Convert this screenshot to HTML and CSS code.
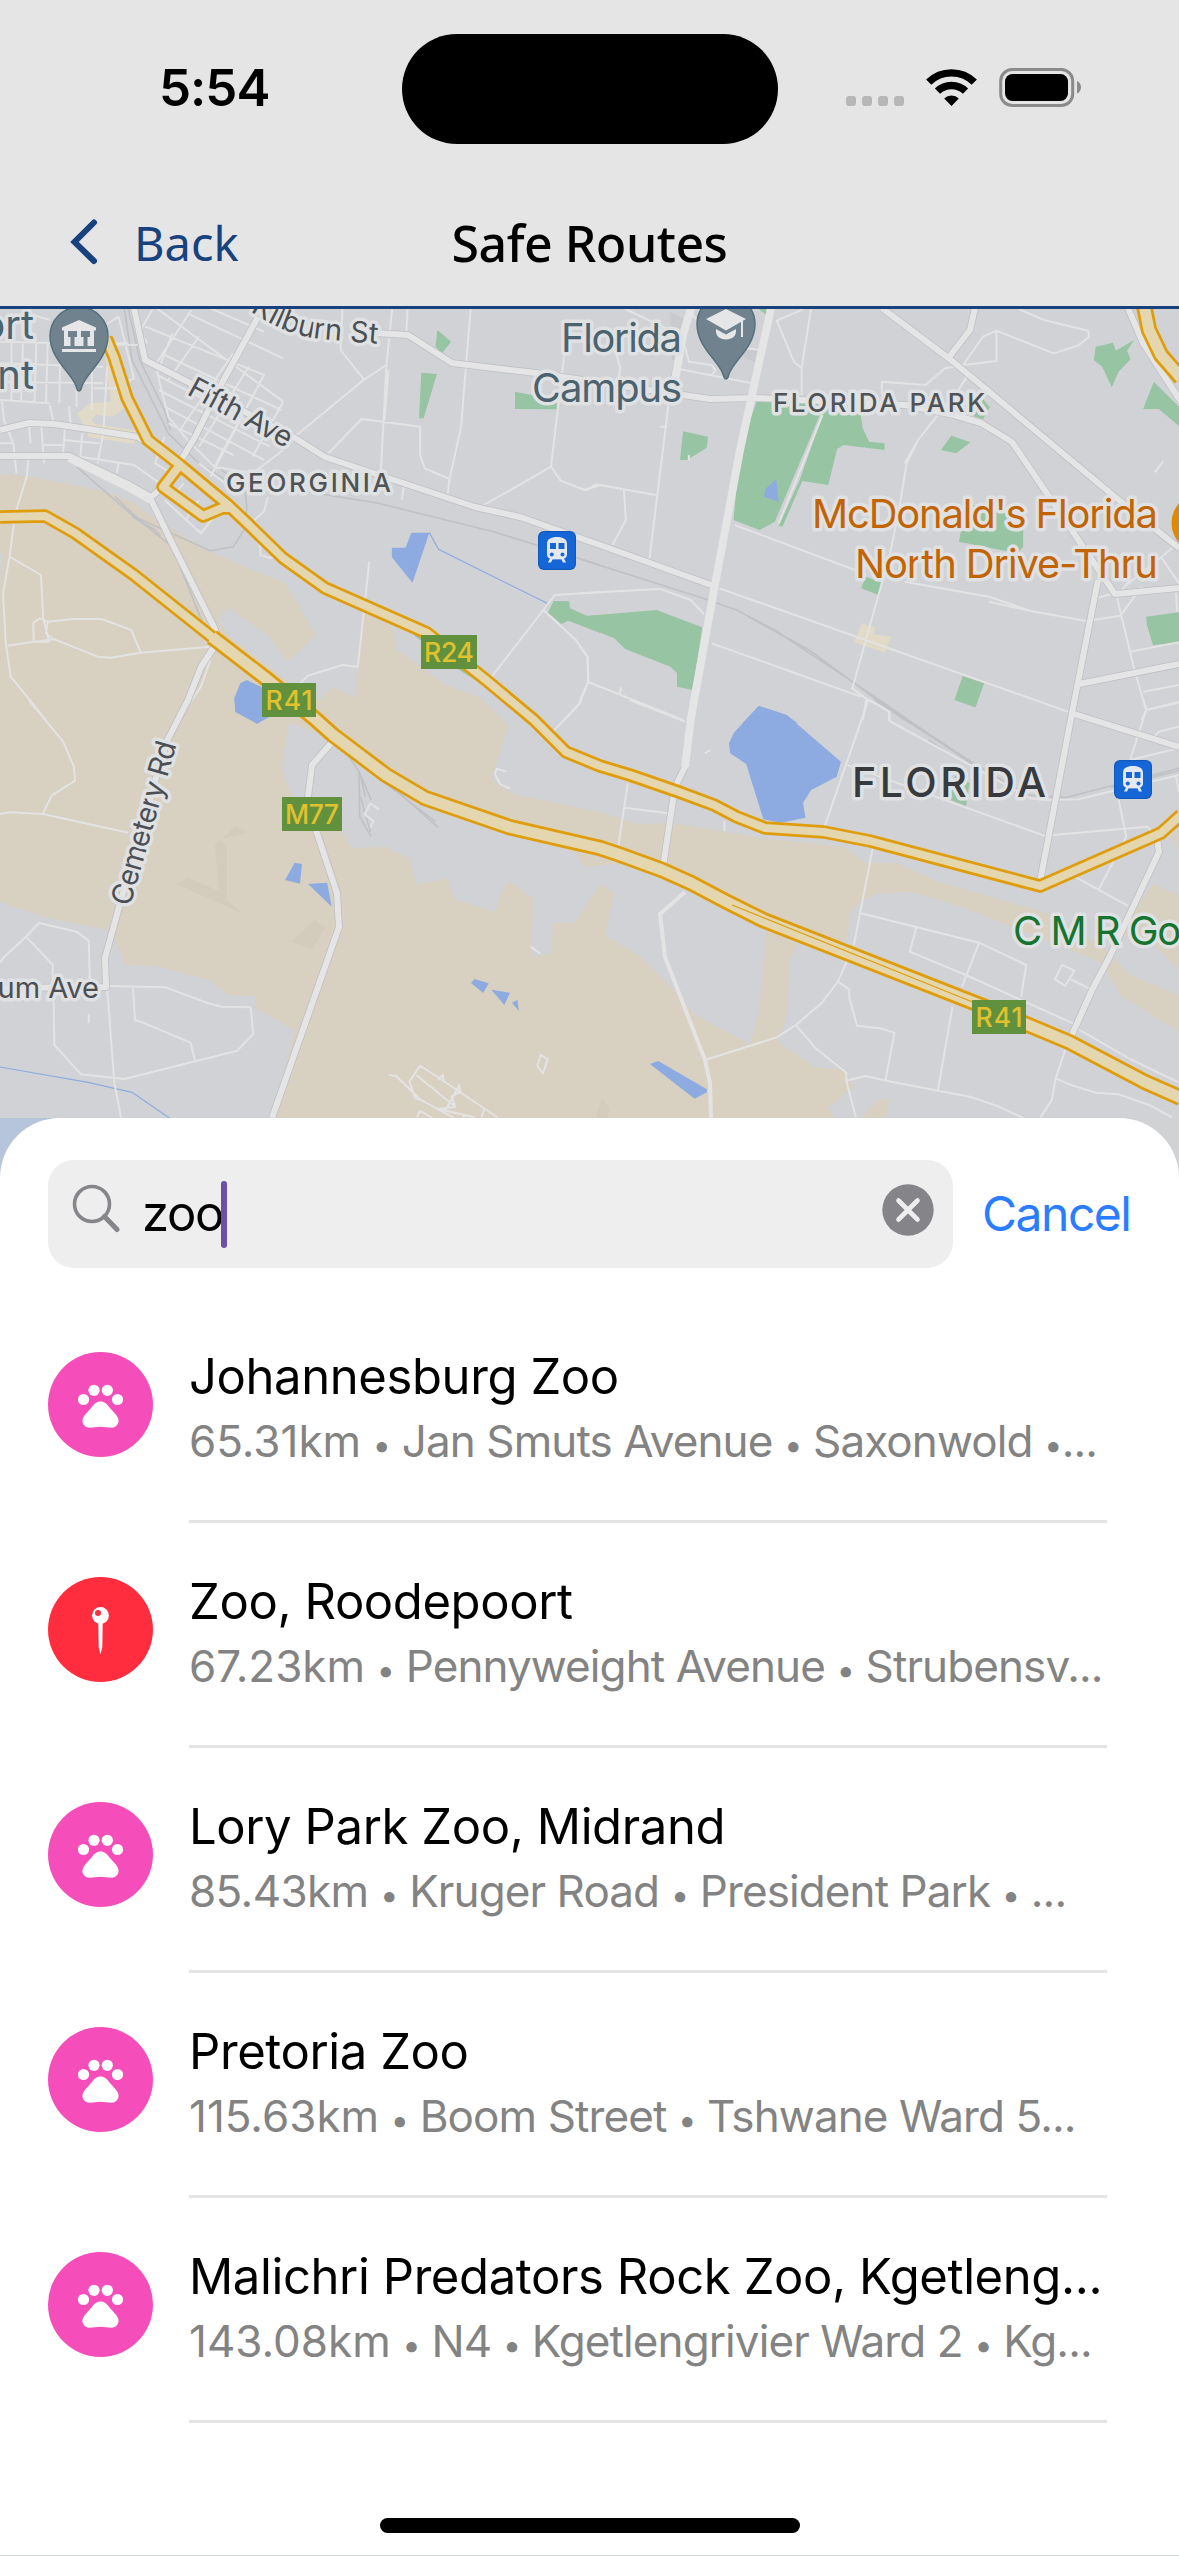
FILE: index.html
```html
<!DOCTYPE html>
<html lang="en">
<head>
<meta charset="utf-8">
<title>Safe Routes</title>
<link rel="stylesheet" href="styles.css">
</head>
<body>
<svg class="defs" width="0" height="0" aria-hidden="true">
  <symbol id="paw" viewBox="0 0 105 105">
    <circle cx="35.5" cy="47.5" r="5.6"/><circle cx="46" cy="38.3" r="5.6"/><circle cx="59.3" cy="38.3" r="5.6"/><circle cx="69.5" cy="47.5" r="5.6"/>
    <path d="M52.5 49.5c4 0 6.500 2.500 9 6l6.500 7.200c5.500 6.500 1.500 13-5 13-3.500 0-6-1-10.500-1s-7 1-10.500 1c-6.500 0-10.500-6.500-5-13l6.500-7.200c2.500-3.500 5-6 9-6z"/>
  </symbol>
  <symbol id="train" viewBox="0 0 38 39">
    <rect width="38" height="39" rx="6" fill="#1259bd"/><rect x="1.200" y="1.200" width="35.600" height="36.600" rx="5" fill="#1567d8"/>
    <path fill="#e5e8ee" d="M9 13c0-5 4-7 10-7s10 2 10 7v10c0 2.500-1 4-3 4.500l2 4h-3l-1.500-3h-9l-1.500 3h-3l2-4c-2-.5-3-2-3-4.500z"/>
    <path fill="#1567d8" d="M12 12h6v6h-6zM20.500 12h6v6h-6zM14.500 30h9v-1.200h-9z"/><circle cx="13.800" cy="23.500" r="2" fill="#1567d8"/><circle cx="24.500" cy="23.500" r="2" fill="#1567d8"/>
  </symbol>
</svg>
<main class="screen">
  <header class="top">
    <div class="status">
      <span class="time">5:54</span>
      <span class="island"></span>
      <svg class="indicators" width="236" height="40" viewBox="0 0 236 40">
        <g fill="#b7b7b7"><rect x="0" y="28" width="10" height="10" rx="3"/><rect x="16" y="28" width="10" height="10" rx="3"/><rect x="32" y="28" width="10" height="10" rx="3"/><rect x="48" y="28" width="10" height="10" rx="3"/></g>
        <g transform="translate(105.500 38)">
          <path d="M0 0l-7.300-7.500a10.500 10.500 0 0 1 14.600 0z"/>
          <path d="M-14-14.800a20 20 0 0 1 28 0" fill="none" stroke="#000" stroke-width="7.400"/>
          <path d="M-22.800-23.800a32.500 32.500 0 0 1 45.600 0" fill="none" stroke="#000" stroke-width="7.400"/>
        </g>
        <rect x="154.700" y="1.500" width="72" height="36" rx="11.500" fill="none" stroke="#8b8b8b" stroke-width="3"/>
        <rect x="159" y="6" width="63" height="27" rx="7.500"/>
        <path d="M231 13c5.300 2 5.300 10.500 0 12.500z" fill="#8b8b8b"/>
      </svg>
    </div>
    <nav class="nav">
      <a class="back">
        <svg width="28" height="46" viewBox="0 0 28 46"><path d="M24 3.500L4.500 23 24 42" fill="none" stroke="#17427e" stroke-width="6" stroke-linecap="round"/></svg>
        <span>Back</span>
      </a>
      <h1>Safe Routes</h1>
    </nav>
  </header>

  <svg class="map" width="1179" height="809" viewBox="0 309 1179 809">
    <rect y="309" width="1179" height="809" fill="#d1d2d6"/>
    <!-- open land -->
    <path class="land" d="M0 475L27 476 69 484 111 493 134 503 165 525 210 551 245 567 285 583 316 635 288 661 268 635 228 608 218 620 230 637 300 690 320 700 332 687 356 698 364 612 393 625 395 648 446 685 480 697 503 720 508 725 492 780 513 794 600 812 639 824 672 823 763 838 844 847 866 863 897 863 939 882 1027 907 1046 913 1103 947 1130 975 1179 995V1032L1120 995 1103 963 962 907 912 892 878 893 863 900 850 912 847 940 797 945 790 960 786 1020 778 1042 815 1067 844 1070 854 1087 828 1108 836 1119H0z"/>
    <path class="land" d="M861 1118L878 1100 889 1099 886 1118zM1153 884L1179 895V970L1150 940 1118 935zM1170 837L1179 828V850z"/>
    <path class="town" d="M289 723L281 768 293 797 341 830 352 848 386 847 409 858 417 885 448 878 454 899 496 912 499 897 509 881 533 898 531 957 551 953 554 922 575 923 601 884 614 893 605 936 639 955 672 988 695 1015 750 1044 759 1013 767 927 660 875 620 863 585 867 576 853 500 832 430 803 340 740zM0 902L48 918 109 930 115 940 126 965 157 966 209 980 228 995 255 996 256 1008 295 1031 272 1118H0zM0 553H3L0 590zM797 945L767 927 860 950 850 975 790 960z"/>
    <path fill="#d3cbbb" d="M176 884L188 878 219 891 215 845 236 826 248 833 220 839 227 848 227 900 242 913zM291 942L315 920 325 928 312 949z"/>
    <!-- parks, water and built-up patches, upper half -->
    <g transform="translate(0 300) scale(.38265 .33333)">
      <path class="park" d="M1143 90L1179 125 1155 160 1138 140zM1101 218L1142 222 1107 355 1095 355zM1346 275L1455 300V328L1346 327zM1447 903L1487 904 1490 925 1535 948 1568 945V998L1485 962 1467 972 1432 938zM1075 1000L1130 1020 1270 1160 1200 1110z"/>
      <path class="water" d="M1075 698H1122L1078 848 1024 772V743H1060zM628 1150L645 1140 690 1165 705 1250 672 1271 615 1235 612 1195z"/>
      <path class="mall" d="M275 170L300 150 325 250 330 320 295 350 250 345 240 360 250 372 355 392 352 432 232 412 220 380 202 340 235 310 290 305z"/>
      <path class="stream" d="M1122 698L1146 748 1430 910"/>
      <g class="rail"><path d="M325 25L345 180 410 330 440 400 520 490 590 540M335 25L365 180 430 330 445 390M200 500L340 640 450 740 530 970M300 590L360 655 550 752 610 740 640 685 645 620 640 570 560 490M345 650L405 690 420 710M800 575L990 610 1290 695 1568 795"/></g>
      <g class="street"><path d="M400 25L365 95 385 130M500 30L400 205M550 25L690 95M380 80L690 225 560 500M410 25L740 305M430 165L735 330M410 225L700 395M415 270L705 440M430 320L690 480M440 370L610 465M490 40L740 175M740 305L660 470M650 200L520 440M610 160L470 390M520 110L440 240M410 215L440 350 490 420 560 500 660 520 740 450M450 100L410 220M690 225L550 530M0 125L360 135M30 130V305M60 130L55 305M95 130L90 310M125 130L120 310M158 140L155 310M0 190L270 200M0 245L270 250M0 300L130 310M310 50L350 235 300 260M60 35L130 60M255 90L310 50M275 130H335M240 210V330M280 200L270 400M200 260V320M245 265H330M5 300L10 360 35 430 43 520M75 370L80 430M108 375L115 490M170 380L165 460M0 430H35M115 435H165M165 420L260 430M215 400L210 470 350 495 430 560M270 400L255 490M310 490L305 520M130 315L140 370M180 320L185 375M75 470L70 530 40 640 25 770 8 880 15 1030 28 1130 120 1260M25 770L107 825 113 955 128 1025 88 1025 87 968 105 955 125 965 190 957 265 957 343 990 368 1058M20 1037L88 1025 143 1018 255 1070 290 1073 368 1058 550 1040M125 965L120 1000 140 1018M430 410L405 490 450 520M430 600L525 700 560 650M450 590L480 550M485 660L520 600M520 490L600 560M480 530L580 600M700 590L690 635 665 660M680 710V765L710 775 730 750M1025 25L1010 195 995 520M1015 210L1005 360M1010 195L950 240 770 410M895 25L890 150 952 240M858 460L945 357 1098 380V465L1110 505 1175 537M1175 537L1205 380 1230 25M1175 537L1170 580M1065 25L1062 100M1475 160L1440 500 1465 542 1528 570 1568 555M1440 500L1265 615M1055 560L1050 600M965 785L935 1100 895 1095 805 1127 785 1150M1568 877L1450 885 1420 930 1505 1020 1535 1070 1537 1145 1515 1210 1475 1260M1420 930L1285 1130M1537 1145L1568 1162M550 1080L525 1160 490 1220"/></g>
    </g>
    <g transform="translate(580 300) scale(.38202 .33333)">
      <path fill="#c9cace" d="M235 35L270 55 260 180 240 180zM300 110L470 150 465 190 400 160z"/>
      <path class="park" d="M463 303H640L735 345 740 385 757 425 797 430V450L690 435 673 447 650 555 582 543 530 680 520 678 575 540 635 345 628 345 510 665 470 690 402 660 418 450zM466 25H491V47zM1350 140L1395 128 1403 152 1450 120 1432 152 1441 178 1410 215 1392 262 1367 200 1345 180zM1502 245L1568 320V378L1515 327H1474zM1055 298L1073 322 1055 358 1030 348zM972 407L1022 427 985 460 945 450zM270 394L335 410 332 443 280 480H262zM1010 610L1160 650V740L1145 760 992 725zM748 830L790 848 780 884 736 865zM1002 1128L1058 1150 1035 1222 980 1200zM1482 950L1568 937V1027L1500 1036 1484 975zM0 940L15 948 200 930 320 982 295 1170 254 1160V1120L237 1100 118 1047 90 1015 0 975z"/>
      <path class="water" d="M514 537L520 605 482 590 485 567zM468 1218L540 1245 570 1270H425z"/>
      <path class="mall" d="M738 970L773 982 768 1002 814 1010 800 1058 717 1027z"/>
      <g class="rail"><path d="M0 777L310 890 410 930 510 990 720 1150 860 1260M440 950L600 1050 730 1160 850 1260"/></g>
      <g class="street"><path d="M635 345L520 670M115 25L225 85M95 160L105 205 100 260M275 140L285 185 345 195 355 210 345 225M262 208L450 250M435 145L470 150M585 27L515 62 560 185 580 205V285M605 25L580 205M295 45L310 65M232 310L182 775M210 380H228M0 565L15 570 42 553 198 585M115 570L120 660 85 735M285 465V482M0 880L210 867 290 900 325 943M345 1030L735 1190M365 865L1290 1240M405 675L720 810M850 845L1070 890 1180 933 1325 963 1415 947 1470 860M1070 905L1180 933M1150 28L1215 60 1330 92 1333 110 1303 137 1240 160 1090 92 1055 110 1003 195 1090 183V92M1003 195L955 205 905 255 790 245V285M1003 195L1010 235 990 270 940 340 885 420 855 490 835 630 810 770 790 850 713 1165 750 1197 740 1260M880 430L850 490M1527 483L1505 517M1403 880L1450 1105 1482 1230 1470 1260M1350 895L1415 875 1440 840M1425 860L1550 745M1520 770L1568 850M1560 880L1563 935M1440 1055L1568 1027M1482 1230L1568 1205M1475 1175L1568 1155M20 1145L270 1260M0 1040L20 1070 22 1145 0 1200M108 1162L103 1185M750 1197L810 1235 808 1260"/></g>
    </g>
    <!-- lower half -->
    <g transform="translate(0 700) scale(.38265 .33333)">
      <path class="water" d="M770 488L789 492 784 551 745 540zM805 552L855 548 867 620zM1240 837L1277 850 1263 879 1231 849zM1284 869L1333 878 1318 915zM1352 900L1356 933 1338 908zM625 0H690V52L672 71 615 35z"/>
      <path class="stream" d="M0 1101L230 1147 345 1177 445 1256"/>
      <g class="rail"><path d="M890 130L938 215 940 350 970 410M938 215L970 300M940 220L955 290M942 290L968 395M985 230L1138 365M1010 245L1145 382"/></g>
      <g class="street"><path d="M75 0L165 125 193 200 196 242 135 287 112 340M0 342L25 337 112 342 335 398M0 788L10 772 68 710 102 669 200 695 232 722 235 855M68 710L138 795V850M140 900L142 1035 212 1123 325 1137 620 1052 662 1002 655 922 580 920 540 908 433 862 278 858M232 942V970M347 860L353 960 372 967 498 1028 510 1083M280 865L299 1150 317 1256M1445 95L1515 10V0M1323 215L1298 206 1293 222 1307 253 1335 266M990 328L968 310 953 343 976 363 968 382M1387 740L1413 761M1413 1065L1431 1078 1419 1120 1404 1098zM1016 1125L1035 1128 1100 1200 1185 1253M1100 1200L1085 1195 1070 1145 1098 1097 1155 1140 1300 1252M1088 1125L1190 1220 1145 1227 1240 1252M1145 1140L1157 1125 1160 1145M1165 1230L1200 1155 1203 1175 1180 1190 1190 1220M1090 1252L1097 1232 1130 1254M1210 1254L1218 1243M1258 1252L1265 1228"/></g>
    </g>
    <g transform="translate(580 700) scale(.38202 .33333)">
      <path class="park" d="M985 0H1042L1035 22zM985 220L1020 250 1010 318 960 295z"/>
      <path class="water" d="M468 18L540 44 683 185 672 230 605 270 584 308 590 353 525 368 480 358 435 192 393 160 390 130 403 98zM205 1083L332 1168V1177L300 1196 183 1092z"/>
      <path fill="#d3cbbb" d="M57 1197L78 1225 70 1256H40z"/>
      <g class="rail"><path d="M770 0L940 125 1030 195M780 0L1030 190 1170 285 1270 293 1390 258 1568 205M912 120L970 165M1390 262L1568 212"/></g>
      <g class="street"><path d="M130 0L275 65M0 0L4 5M755 0L640 380M760 0L810 35V63L1180 295 1220 300 1305 298 1568 225M695 193L1215 407 1485 380 1520 420M1475 0L1482 30 1440 180M1482 30L1568 8M1500 115L1515 95 1568 80M1410 300L1430 410 1357 570M1440 180L1568 145M1290 527L1435 618M1560 230L1568 275M125 250L100 440M115 323L232 340M378 362V393M327 160L341 150M767 440L717 735M700 780L675 845 632 910 565 975 515 1012 327 1080M675 845L705 868V893L725 977 785 985 823 998 800 1140M565 975L617 1045 697 1118V1142L722 1252M697 1142L747 1128 815 1145 1020 1190 1090 1217 1160 1254M735 640L1045 728 1168 795 1155 890M880 685L863 755 1010 825 1300 975M1045 728L1000 860M975 920L937 1170M1262 795L1294 812 1270 858 1243 838zM1285 838L1333 866M1305 988L1440 1077 1568 1148M1270 1050L1245 1135 1235 1200 1205 1252M1245 1135L1290 1157 1350 1178 1410 1183 1490 1215 1550 1252"/></g>
    </g>
    <!-- main roads: shaded edge, then surface -->
    <g class="road-edge"><use href="#roads"/></g>
    <g class="road"><g id="roads"><path d="M134 308L145 360 188 382 295 438 325 457 475 507 520 517 600 545 714 586M258 317L222 383 195 437 178 465M0 430L29 423 54 424 88 429 138 437 153 447M0 456L69 456 130 485 151 497 163 487M151 500L172 543 214 627 219 640 212 650 201 667 188 700 166 743 119 907 105 958 106 987 0 988M375 333L408 335 452 363 536 373 683 395 710 399 756 398 905 405 954 415 981 423 1012 442 1115 594 1179 588M691 308L683 335 674 380M771 308L740 450 714 590 691 718 685 767 675 787 663 867M882 308L951 360 1115 497 1179 548M975 308L970 330 949 357M1128 308L1143 343 1172 388 1181 402M1098 580L1071 718 1040 882M1079 684L1179 664M1071 713L1179 747M1157 838L1159 852 1109 958 1092 990 1071 1037M334 740L312 765 308 797 316 830 337 893 339 927 272 1118"/></g></g>
    <path class="road thick" d="M771 308L740 450 714 590 691 718 685 767M69 458L130 488 151 500M675 380L683 335 691 308"/>
    <path class="road thin" d="M685 892L660 914 665 957 705 1060 710 1083 711 1118"/>
    <g fill="none" stroke-linejoin="round">
      <g stroke="#e09d0b">
        <path stroke-width="13.500" d="M106 338L114 357 127 398 148 440 180 465 228 505 247 523 283 558 325 588 427 633 486 680 534 720 566 752 600 766 630 775 679 792 714 805 737 817 765 828 824 832 870 841 1040 886 1161 833 1181 815M180 465L163 487 203 516 222 508 233 508M0 517L45 516 75 533 134 575 212 637"/>
        <path stroke-width="16.500" d="M212 637L264 677 314 718 333 735 386 775 425 798 509 827 600 848 618 854 662 870 691 883 727 902 763 920 985 1007 1069 1042 1145 1082 1181 1098M1143 300L1149 330 1161 355 1181 378"/>
      </g>
      <g stroke="#e4d6ae">
        <path stroke-width="8" d="M106 338L114 357 127 398 148 440 180 465 228 505 247 523 283 558 325 588 427 633 486 680 534 720 566 752 600 766 630 775 679 792 714 805 737 817 765 828 824 832 870 841 1040 886 1161 833 1181 815M180 465L163 487 203 516 222 508 233 508M0 517L45 516 75 533 134 575 222 645"/>
        <path stroke-width="11" d="M212 637L264 677 314 718 333 735 386 775 425 798 509 827 600 848 618 854 662 870 691 883 727 902 763 920 985 1007 1069 1042 1145 1082 1181 1098M1143 300L1149 330 1161 355 1181 378"/>
      </g>
      <path stroke="#e09d0b" stroke-width="1.300" d="M732 905L985 1007"/>
    </g>
    <!-- route shields -->
    <g fill="#62913d"><path d="M421 635h56v34h-56zM262 683h54v34h-54zM282 797h60v34h-60zM972 1000h54v34h-54z"/></g>
    <g class="shield"><text x="449" y="661.500" textLength="50">R24</text><text x="289" y="709.500" textLength="47">R41</text><text x="312" y="823.500" textLength="54">M77</text><text x="999" y="1026.500" textLength="47">R41</text></g>
    <use href="#train" x="538" y="531" width="38" height="39"/>
    <use href="#train" x="1114" y="760" width="38" height="39"/>
    <!-- place pins -->
    <g fill="#6f828d" stroke="#56707c" stroke-width="1.500">
      <path d="M79 391c-2 0-2-2-3-5-4-13-26-27-26-50a29 29 0 0 1 58 0c0 23-22 37-26 50-1 3-1 5-3 5z"/>
      <path d="M726 379c-2 0-2-2-3-5-4-13-26-27-26-50a29 29 0 0 1 58 0c0 23-22 37-26 50-1 3-1 5-3 5z"/>
    </g>
    <g fill="#e5e6e8"><path d="M79 320l17 7.500v3h-2v15.500H64v-15.500h-2v-3zM62 349h34v3H62z"/><path d="M726 309l20 10-20 11.500-20-11.500zM716 329l10 5.500 10-5.500c1 7-4 10.500-10 10.500s-11-3.500-10-10.500zM741 321h2v16h-2z"/></g>
    <path fill="#6f828d" d="M68 331h9v6h-2.500v9h-4v-9H68zM81 331h9v6h-2.500v9h-4v-9H81z"/>
    <circle cx="1201" cy="523" r="29.500" fill="#df8a05"/>
    <!-- labels -->
    <defs><path id="kilburn" d="M250 311Q285 335 320 339L380 344"/></defs>
    <g class="label">
      <g class="poi" text-anchor="end"><text x="34" y="339">ort</text><text x="34" y="389">nt</text><text x="682" y="352" textLength="121">Florida</text><text x="682" y="402" textLength="150">Campus</text></g>
      <g class="food" text-anchor="end"><text x="1158" y="528" textLength="346">McDonald's Florida</text><text x="1158" y="578" textLength="303">North Drive-Thru</text></g>
      <text class="golf" x="1013" y="945">C M R Go</text>
      <text class="area" x="226" y="491.500" textLength="165">GEORGINIA</text>
      <text class="area" x="773" y="412" textLength="212">FLORIDA PARK</text>
      <text class="city" x="852" y="797" textLength="194">FLORIDA</text>
      <g class="way"><text><textPath href="#kilburn">Kilburn St</textPath></text><text transform="translate(186 394) rotate(28.500)" textLength="114">Fifth Ave</text><text transform="translate(130 907) rotate(-74)" textLength="169">Cemetery Rd</text><text x="99" y="998" text-anchor="end">lum Ave</text></g>
    </g>
  </svg>

  <section class="backdrop">
    <div class="sheet">
      <form class="search">
        <div class="field">
          <svg width="49" height="49" viewBox="0 0 49 49"><g fill="none" stroke="#86868a"><circle cx="20" cy="20" r="17.500" stroke-width="3.600"/><path d="M32.500 32.500L45 45.500" stroke-width="5" stroke-linecap="round"/></g></svg>
          <span class="query">zoo</span><span class="caret"></span>
          <svg class="clear" width="52" height="52" viewBox="0 0 52 52"><circle cx="26" cy="26" r="25.700" fill="#858489"/><path d="M16.500 16.500l19 19M35.500 16.500l-19 19" stroke="#eee" stroke-width="4.600" stroke-linecap="round"/></svg>
        </div>
        <span class="cancel">Cancel</span>
      </form>
      <ul class="results">
        <li><span class="badge"><svg><use href="#paw"/></svg></span><div class="text"><p class="name">Johannesburg Zoo</p><p class="detail"><span class="km">65.31km</span> <i>•</i> Jan Smuts Avenue <i>•</i> Saxonwold <i>•</i>...</p></div></li>
        <li><span class="badge pin"><svg viewBox="0 0 105 105"><circle cx="52.500" cy="38.500" r="8.400"/><path d="M50.300 46h4.400l-.4 24-1.800 7.500-1.800-7.500z"/><circle cx="50" cy="36" r="3" fill="#ff2d3d"/></svg></span><div class="text"><p class="name">Zoo, Roodepoort</p><p class="detail"><span class="km">67.23km</span> <i>•</i> Pennyweight Avenue <i>•</i> Strubensv...</p></div></li>
        <li><span class="badge"><svg><use href="#paw"/></svg></span><div class="text"><p class="name">Lory Park Zoo, Midrand</p><p class="detail"><span class="km tight">85.43km</span> <i>•</i> Kruger Road <i>•</i> President Park <i>•</i> ...</p></div></li>
        <li><span class="badge"><svg><use href="#paw"/></svg></span><div class="text"><p class="name">Pretoria Zoo</p><p class="detail"><span class="km">115.63km</span> <i>•</i> Boom Street <i>•</i> Tshwane Ward 5...</p></div></li>
        <li><span class="badge"><svg><use href="#paw"/></svg></span><div class="text"><p class="name">Malichri Predators Rock Zoo, Kgetleng...</p><p class="detail"><span class="km">143.08km</span> <i>•</i> N4 <i>•</i> Kgetlengrivier Ward 2 <i>•</i> Kg...</p></div></li>
      </ul>
      <div class="home"></div>
    </div>
  </section>
</main>
</body>
</html>
```
FILE: styles.css
```css
* { box-sizing: border-box; }
body, h1, ul, p { margin: 0; padding: 0; }
body { width: 1179px; background: #fff; font-family: Inter, "Liberation Sans", sans-serif; color: #000; }
.defs { display: block; }
.screen { display: flex; flex-direction: column; height: 2556px; overflow: hidden; }

.top { height: 316px; height: 309px; flex: none; background: #e5e5e5; border-bottom: 3px solid #17427e; }
.status { display: grid; grid-template-columns: 402px 376px 1fr; height: 178px; align-items: start; }
.time { margin: 57px 0 0 159px; font-size: 51px; line-height: 62px; font-weight: 600; letter-spacing: -1px; }
.island { margin-top: 34px; height: 110px; border-radius: 55px; background: #000; }
.indicators { margin: 68px 0 0 68px; }
.nav { display: grid; grid-template-columns: 1fr auto 1fr; height: 128px; padding-top: 35px; font-family: "Noto Sans", sans-serif; line-height: 60px; }
.back { display: flex; align-items: flex-start; gap: 36px; padding-left: 70px; color: #17427e; font-size: 47px; }
.back svg { margin-top: 6px; flex: none; }
.nav h1 { font-size: 50px; font-weight: 500; letter-spacing: -.5px; }

.map { display: block; flex: none; }
.land { fill: #d8d0c0; }
.town { fill: #d1d2d6; }
.park { fill: #97c4a3; }
.water { fill: #8dabe0; }
.mall { fill: #e1dac6; }
.stream, .rail path, .street path { fill: none; vector-effect: non-scaling-stroke; }
.stream { stroke: #8dabe0; stroke-width: 1.2px; }
.rail path { stroke: #bfc1c5; stroke-width: 1.6px; }
.street path { stroke: #e3e3e3; stroke-width: 2px; stroke-linejoin: round; }
.road, .road-edge { fill: none; stroke-linejoin: round; }
.road { stroke: #e5e5e5; stroke-width: 6px; }
.road-edge { stroke: #bec0c4; stroke-width: 7.6px; }
.thick { stroke-width: 8px; }
.thin { stroke-width: 4px; stroke: #e3e3e3; }
.shield { fill: #e2c12f; font-size: 26.5px; font-weight: 500; text-anchor: middle; }
.label { paint-order: stroke; stroke: #dfe1e3; stroke-width: 7px; stroke-linejoin: round; }
.poi { fill: #4b636e; font-size: 40px; }
.food { fill: #c26404; font-size: 40px; }
.golf { fill: #15742f; font-size: 40px; letter-spacing: -1.5px; }
.area { fill: #505356; font-size: 26px; font-weight: 500; }
.city { fill: #383b3e; font-size: 41px; font-weight: 500; }
.way { fill: #4c4f53; font-size: 29px; }

.backdrop { flex: 1; background: linear-gradient(90deg, #b6c5dc 0, #b6c5dc 5%, #d1d2d4 95%); }
.sheet { display: flex; flex-direction: column; height: 100%; padding-top: 42px; border-radius: 60px 60px 0 0; background: #fff; border-bottom: 1px solid #d6d6dd; }
.search { display: flex; align-items: center; height: 108px; padding-left: 48px; gap: 29px; flex: none; }
.field { display: flex; width: 905px; height: 108px; padding: 0 19px 0 24px; border-radius: 26px; background: #eee; flex: none; }
.field svg { margin-top: 24px; flex: none; }
.query { margin: 20px 0 0 21px; font-size: 49px; line-height: 68px; letter-spacing: -1.3px; }
.caret { width: 6px; height: 67px; margin: 21px 0 0 -2px; border-radius: 3px; background: #6a51a7; }
.field .clear { margin-left: auto; }
.cancel { font-size: 48px; line-height: 70px; color: #2a7dff; letter-spacing: -1.5px; }
.results { list-style: none; padding: 30px 72px 0 48px; flex: none; }
.results li { display: flex; height: 225px; gap: 36px; }
.badge { width: 105px; height: 105px; margin-top: 54px; flex: none; border-radius: 50%; background: #f54eba; fill: #fff; }
.badge.pin { background: #ff2d3d; }
.badge svg { display: block; width: 105px; height: 105px; }
.text { width: 918px; padding-top: 48px; border-bottom: 3px solid #e4e4e6; white-space: nowrap; }
.name { font-size: 49px; line-height: 62px; letter-spacing: -.4px; }
.detail { margin-top: 2px; font-size: 44px; line-height: 62px; letter-spacing: -.9px; color: #838383; }
.detail i { font-style: normal; font-size: 33px; line-height: 1; }
.km { letter-spacing: 0; }
.km.tight { letter-spacing: -.6px; }
.home { width: 420px; height: 15px; margin: 95px auto 0; border-radius: 8px; background: #000; flex: none; }
```
